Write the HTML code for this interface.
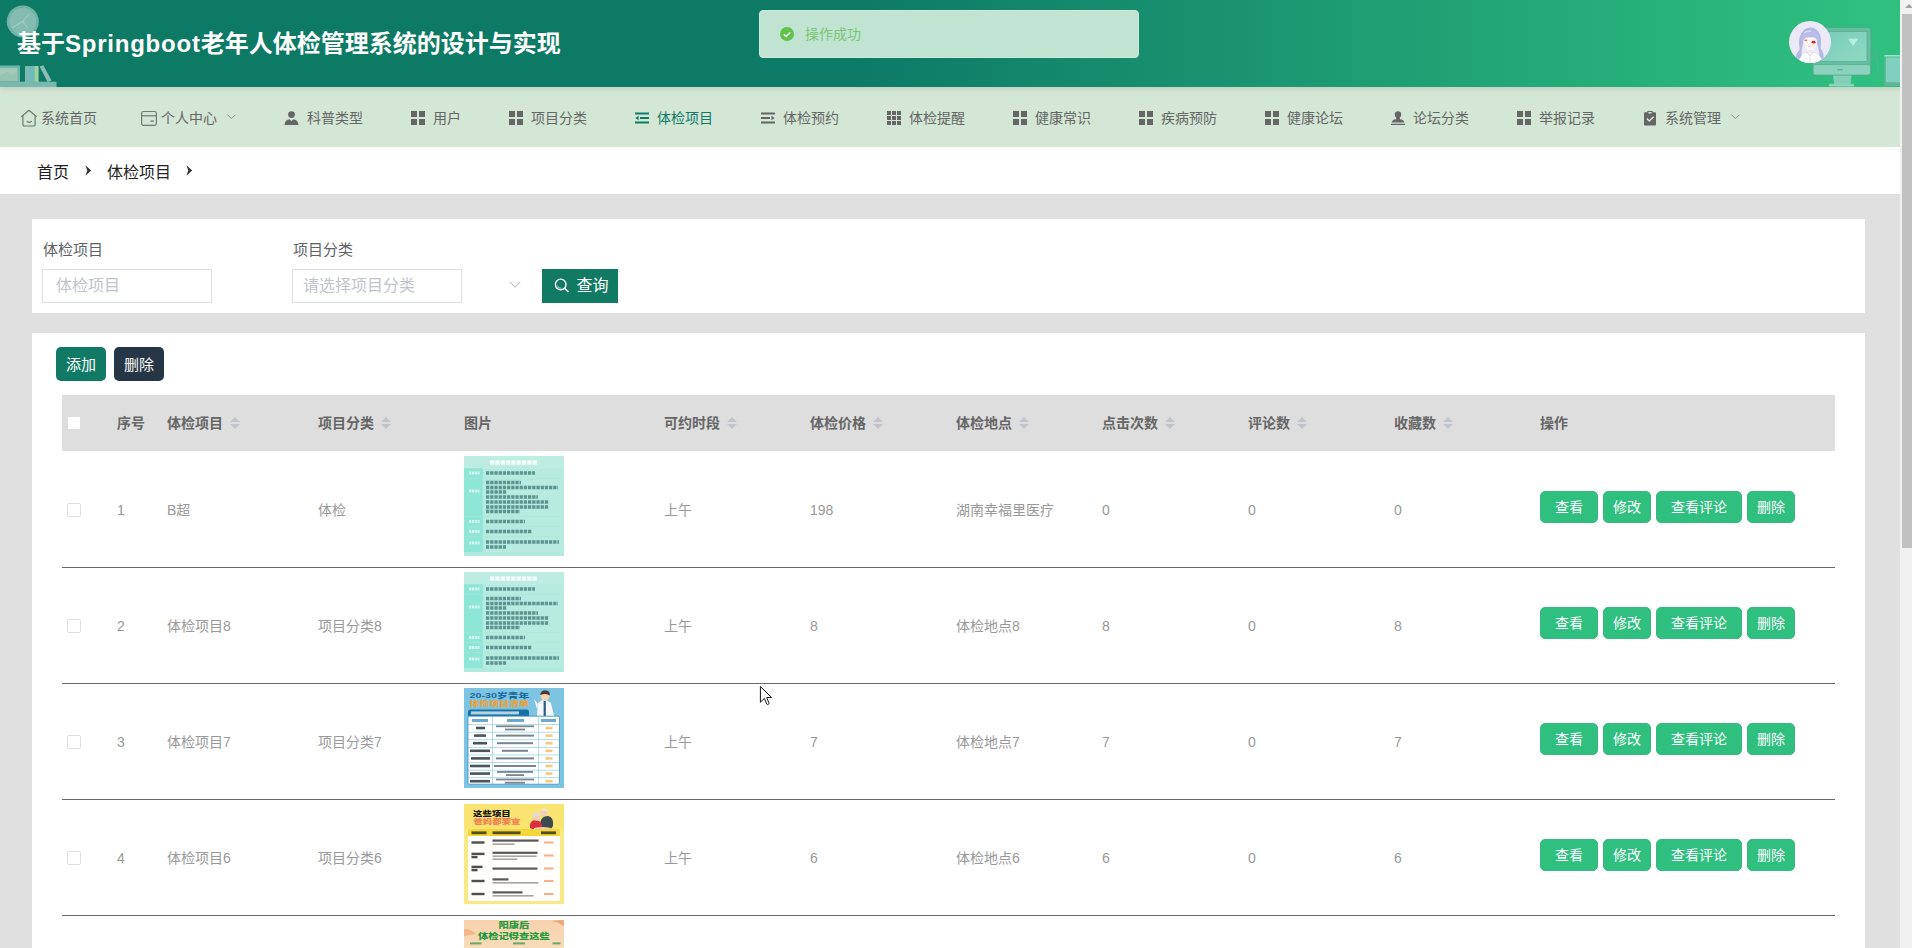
<!DOCTYPE html>
<html lang="zh-CN">
<head>
<meta charset="utf-8">
<title>基于Springboot老年人体检管理系统的设计与实现</title>
<style>
*{box-sizing:border-box;margin:0;padding:0}
html,body{width:1912px;height:948px;overflow:hidden;background:#e0e0e0;font-family:"Liberation Sans","Noto Sans CJK SC",sans-serif;color:#606266;font-size:14px}
#page{position:absolute;left:0;top:0;width:1900px;height:948px;overflow:hidden;background:#e0e0e0}
#sb{position:absolute;left:1900px;top:0;width:12px;height:948px;background:#f1f1f1}
#sb .thumb{position:absolute;left:2px;top:14px;width:10px;height:534px;background:#c1c1c1}
#sb .up{position:absolute;left:5px;top:4px;width:0;height:0;border-left:4px solid transparent;border-right:4px solid transparent;border-bottom:4px solid #a3a3a3}
/* header */
#hd{position:absolute;left:0;top:0;width:1900px;height:87px;background:linear-gradient(90deg,#0d7a66 0%,#0d7a66 45%,#2fc080 99%,#2fc080 100%);box-shadow:0 2px 5px rgba(0,0,0,.10);z-index:3}
#title{position:absolute;left:17px;top:26px;height:36px;line-height:36px;font-size:24px;font-weight:700;color:#fff;white-space:nowrap}
#toast{position:absolute;left:759px;top:10px;width:380px;height:48px;border-radius:4px;background:#c1e3d1;border:1px solid #cfead9}
#toast .t{position:absolute;left:45px;top:0;line-height:47px;font-size:14px;color:#7cc576}
#toast svg{position:absolute;left:20px;top:16px}
/* nav */
#nav{position:absolute;left:0;top:87px;width:1900px;height:60px;background:#d4e6d6;z-index:2}
.mi{position:absolute;top:1px;height:60px;line-height:61px;font-size:14px;color:#666;white-space:nowrap;fill:#666;stroke:#666}
.mi svg{position:absolute;top:22px;left:0;overflow:visible}
.mi.act{color:#0f7a66;fill:#0f7a66;stroke:#0f7a66}
/* breadcrumb */
#bc{position:absolute;left:0;top:147px;width:1900px;height:47px;background:#fff}
#bc span{position:absolute;top:1px;line-height:50px;font-size:16px;color:#222;white-space:nowrap}
#bc svg{position:absolute;top:17.5px}
/* panels */
#p1{position:absolute;left:32px;top:219px;width:1833px;height:94px;background:#fff}
#p2{position:absolute;left:32px;top:333px;width:1833px;height:640px;background:#fff}
.lbl{position:absolute;font-size:15px;color:#606266;line-height:20px;white-space:nowrap}
.inp{position:absolute;height:34px;border:1px solid #dcdfe6;background:#fff;font-size:16px;line-height:32px;color:#c0c4cc;padding-left:12px;white-space:nowrap}
.btn{position:absolute;color:#fff;text-align:center;white-space:nowrap}
/* table */
#th{position:absolute;left:62px;top:395px;width:1773px;height:56px;background:#dedede}
.h{position:absolute;top:0;height:56px;line-height:56px;font-size:14px;font-weight:700;color:#666;white-space:nowrap}
.car{display:inline-block;position:relative;width:10px;height:14px;margin-left:7px;vertical-align:middle;top:-1px}
.car:before,.car:after{content:"";position:absolute;left:0;border:5px solid transparent}
.car:before{top:-4px;border-bottom-color:#c0c4cc}
.car:after{top:8px;border-top-color:#c0c4cc}
.row{position:absolute;left:62px;width:1773px;height:116px;border-bottom:1px solid #666}
.c{position:absolute;top:0;height:115px;line-height:116px;font-size:14px;color:#999;white-space:nowrap}
.cb{position:absolute;left:5px;top:51px;width:14px;height:14px;border:1px solid #dcdfe6;border-radius:2px;background:#fff}
.ob{position:absolute;top:39px;height:32px;line-height:30px;border-radius:5px;background:#2fc080;border:1px solid #3ab781;color:#fff;font-size:14px;text-align:center}
.im{position:absolute;left:402px;top:4px;width:100px;height:100px;overflow:hidden}
</style>
</head>
<body>
<svg width="0" height="0" style="position:absolute">
<defs>
<symbol id="i-home" viewBox="0 0 16 18" overflow="visible"><path d="M0.7 7.5 L8 1.3 L15.3 7.5" fill="none" stroke="#6f7b71" stroke-width="1.2" stroke-linecap="round" stroke-linejoin="round"/><path d="M1.9 6.8 V15.4 a1.6 1.6 0 0 0 1.6 1.6 H12.5 a1.6 1.6 0 0 0 1.6 -1.6 V6.8" fill="none" stroke="#6f7b71" stroke-width="1.2"/><path d="M6.2 12.5 q2.1 1.7 4.2 0" fill="none" stroke="#6f7b71" stroke-width="1.2" stroke-linecap="round"/></symbol>
<symbol id="i-wallet" viewBox="0 0 16 18" overflow="visible"><rect x="0.6" y="2.5" width="14.8" height="13.9" rx="1.8" fill="none" stroke="#6f7b71" stroke-width="1.2"/><path d="M0.6 6.8 H15.4" fill="none" stroke="#6f7b71" stroke-width="1.2"/><path d="M9.4 12.1 H12.9" fill="none" stroke="#6f7b71" stroke-width="1.3"/></symbol>
<symbol id="i-user" viewBox="0 0 16 16"><circle cx="7.5" cy="4.6" r="3.4" stroke="none"/><path d="M0.5 15 C0.8 11.2 3.2 9.4 5.4 9.2 L7.5 11 L9.6 9.2 C11.8 9.4 14.2 11.2 14.5 15 Z" stroke="none"/></symbol>
<symbol id="i-g4" viewBox="0 0 16 16"><path d="M0 1h6v6h-6z M8 1h6v6h-6z M0 9h6v6h-6z M8 9h6v6h-6z" stroke="none"/></symbol>
<symbol id="i-g9" viewBox="0 0 16 16"><path d="M0 1h4v4h-4z M5 1h4v4h-4z M10 1h4v4h-4z M0 6h4v4h-4z M5 6h4v4h-4z M10 6h4v4h-4z M0 11h4v4h-4z M5 11h4v4h-4z M10 11h4v4h-4z" stroke="none"/></symbol>
<symbol id="i-outdent" viewBox="0 0 16 16"><path d="M0 2.5h14v2h-14z M5 7h9v2h-9z M0 11.5h14v2h-14z M0.3 8 L3.6 5.8 V10.2 Z" stroke="none"/></symbol>
<symbol id="i-indent" viewBox="0 0 16 16"><path d="M0 2.5h14v2h-14z M0 7h9v2h-9z M0 11.5h14v2h-14z M13.7 8 L10.4 5.8 V10.2 Z" stroke="none"/></symbol>
<symbol id="i-stamp" viewBox="0 0 16 16"><circle cx="7" cy="4.4" r="3.2" stroke="none"/><path d="M5.4 6 H8.6 L9 9.2 C11.5 9.4 13 10.4 13.4 12.6 H0.6 C1 10.4 2.5 9.4 5 9.2 Z M0 13.8 H14 V15 H0 Z" stroke="none"/></symbol>
<symbol id="i-clip" viewBox="0 0 16 16"><path fill-rule="evenodd" d="M1 3.2 a1 1 0 0 1 1 -1 H4.4 V1 H9.6 V2.2 H12 a1 1 0 0 1 1 1 V14.5 a1 1 0 0 1 -1 1 H2 a1 1 0 0 1 -1 -1 Z M5.4 2 V3.6 H8.6 V2 Z M3.4 9.2 L4.5 8.1 L6.3 9.9 L10 6.2 L11.1 7.3 L6.3 12.1 Z" stroke="none"/></symbol>
</defs>
</svg>
<div id="page">
<div id="hd">
  <svg style="position:absolute;left:0;top:0" width="70" height="87" viewBox="0 0 70 87">
    <circle cx="22.8" cy="21.4" r="16" fill="#7ab6ac" opacity=".92"/>
    <circle cx="22.8" cy="21.4" r="13.4" fill="#86bdb4" opacity=".9"/>
    <path d="M22.8 21.4 L29 14.4 M22.8 21.4 L12.6 27.4 M22.8 21.4 L27.4 28" stroke="#9ccbc2" stroke-width="1.3" fill="none" stroke-linecap="round"/>
    <rect x="0" y="65.5" width="20" height="16.4" fill="#72b6ab"/>
    <rect x="0" y="68" width="17.4" height="13" fill="#a2cab6"/>
    <path d="M0 76 L7 72 L12 75 L17.4 71 V81 H0Z" fill="#96c4ad"/>
    <rect x="25" y="66" width="5" height="16" fill="#7eb6b1"/>
    <rect x="30" y="66" width="4.2" height="16" fill="#6dbbc0"/>
    <rect x="34.2" y="66" width="4.4" height="16" fill="#9dd0a2"/>
    <path d="M39.6 66.4 L43.2 65.2 L51.6 80.6 L47.6 81.9 Z" fill="#8fbcb8"/>
    <rect x="0" y="81.7" width="56.5" height="5.3" fill="#79b8ad"/>
  </svg>
  <div id="title">基于<span style="letter-spacing:.77px">Springboot</span>老年人体检管理系统的设计与实现</div>
  <div id="toast"><svg width="14" height="14" viewBox="0 0 14 14"><circle cx="7" cy="7" r="7" fill="#5fc24a"/><path d="M3.8 7.2 L6.1 9.4 L10.2 5.2" fill="none" stroke="#fff" stroke-width="1.4"/></svg><div class="t">操作成功</div></div>
  <svg style="position:absolute;left:1780px;top:0" width="120" height="87" viewBox="0 0 120 87">
    <defs><linearGradient id="scr" x1="0" y1="0" x2="1" y2="1"><stop offset="0" stop-color="#78cdb9"/><stop offset="1" stop-color="#8fd8c3"/></linearGradient>
    <clipPath id="avc"><circle cx="30" cy="42" r="21"/></clipPath></defs>
    <!-- monitor -->
    <rect x="32.6" y="27.4" width="58.4" height="48" rx="3" fill="#66bd9f" stroke="#4aa98a" stroke-width=".8"/>
    <rect x="33.2" y="64.6" width="57.2" height="10.4" rx="2.4" fill="#8bd3bd" stroke="#4fae90" stroke-width=".7"/>
    <rect x="36.6" y="31.6" width="50.4" height="30" fill="url(#scr)" stroke="#4fae90" stroke-width=".7"/>
    <rect x="57" y="69.2" width="6" height="1" rx=".5" fill="#4fa88a"/>
    <path d="M53 75.4 H71.6 L70.4 84 H54.2 Z" fill="#83cfb8"/>
    <rect x="49" y="83.8" width="25" height="2.6" rx="1.2" fill="#8ad6be"/>
    <path d="M68 38.8 H78.2 L73.1 46 Z" fill="#b6efe0"/>
    <!-- cable -->
    <path d="M91 59 Q94 58 94 52 Q94 48 96 50 L99 76 Q99 80 104 80" fill="none" stroke="#4fb48f" stroke-width="1"/>
    <!-- tablet -->
    <rect x="104.2" y="55" width="20" height="31" rx="1.6" fill="#5cb697"/>
    <rect x="105.8" y="57.4" width="18" height="24.8" fill="#7fd0bd"/>
    <rect x="104.2" y="55" width="20" height="1.4" rx=".7" fill="#9be4d0"/>
    <!-- avatar -->
    <circle cx="30" cy="42" r="21" fill="#ece9f6"/>
    <g clip-path="url(#avc)">
      <path d="M19.6 50 Q17 36 24.4 29.6 Q31 25.4 37 30 Q42.6 35 40.6 48 Q44.6 54 43.6 61 L39.6 58.6 Q39.6 50 37 44 L23 44 Q21 50 21.4 57 L15.6 62 Q14.6 55 19.6 50Z" fill="#b3b8e6"/>
      <ellipse cx="30.2" cy="42.6" rx="7" ry="7.6" fill="#fdf3f1"/>
      <path d="M21.8 42.4 Q20.4 30.4 30 30 Q39.6 30.4 38.8 42 Q36.6 36.6 30.2 37.4 Q24.4 36.8 21.8 42.4Z" fill="#b9bde8"/>
      <path d="M24 33 Q27 30.6 31 31.4" fill="none" stroke="#d9dcf5" stroke-width="1.2"/>
      <path d="M20 58 Q24.6 51.4 30 53 Q35.4 51.4 41 58 L43 66 H18Z" fill="#fefdfe"/>
      <path d="M26.6 52 L30 55.6 L33.4 52" fill="none" stroke="#d9bdb8" stroke-width=".7"/>
      <path d="M30 55.6 V64" fill="none" stroke="#e4d0d0" stroke-width=".6"/>
      <ellipse cx="33.6" cy="42.2" rx="2" ry="1.4" fill="#dc2a30"/>
      <ellipse cx="25.8" cy="40.4" rx="1.5" ry=".8" fill="#d9646c" opacity=".85"/>
      <path d="M28.4 46 Q30 46.9 31.6 46" fill="none" stroke="#eaa9a9" stroke-width=".5"/>
    </g>
  </svg>
</div>
<div id="nav">
<div class="mi" style="left:21px;padding-left:20px"><svg style="top:21px" width="16" height="18" viewBox="0 0 16 18"><use href="#i-home"/></svg>系统首页</div>
<div class="mi" style="left:141px;padding-left:20px"><svg style="top:21px" width="16" height="18" viewBox="0 0 16 18"><use href="#i-wallet"/></svg>个人中心<svg class="arr" style="left:86px;top:26px" width="9" height="6" viewBox="0 0 9 6"><path d="M0.5 0.7 L4.5 4.7 L8.5 0.7" fill="none" stroke="#8a948a" stroke-width="1"/></svg></div>
<div class="mi" style="left:284px;padding-left:23px"><svg width="16" height="16" viewBox="0 0 16 16"><use href="#i-user"/></svg>科普类型</div>
<div class="mi" style="left:411px;padding-left:22px"><svg width="16" height="16" viewBox="0 0 16 16"><use href="#i-g4"/></svg>用户</div>
<div class="mi" style="left:509px;padding-left:22px"><svg width="16" height="16" viewBox="0 0 16 16"><use href="#i-g4"/></svg>项目分类</div>
<div class="mi act" style="left:635px;padding-left:22px"><svg width="16" height="16" viewBox="0 0 16 16"><use href="#i-outdent"/></svg>体检项目</div>
<div class="mi" style="left:761px;padding-left:22px"><svg width="16" height="16" viewBox="0 0 16 16"><use href="#i-indent"/></svg>体检预约</div>
<div class="mi" style="left:887px;padding-left:22px"><svg width="16" height="16" viewBox="0 0 16 16"><use href="#i-g9"/></svg>体检提醒</div>
<div class="mi" style="left:1013px;padding-left:22px"><svg width="16" height="16" viewBox="0 0 16 16"><use href="#i-g4"/></svg>健康常识</div>
<div class="mi" style="left:1139px;padding-left:22px"><svg width="16" height="16" viewBox="0 0 16 16"><use href="#i-g4"/></svg>疾病预防</div>
<div class="mi" style="left:1265px;padding-left:22px"><svg width="16" height="16" viewBox="0 0 16 16"><use href="#i-g4"/></svg>健康论坛</div>
<div class="mi" style="left:1391px;padding-left:22px"><svg width="16" height="16" viewBox="0 0 16 16"><use href="#i-stamp"/></svg>论坛分类</div>
<div class="mi" style="left:1517px;padding-left:22px"><svg width="16" height="16" viewBox="0 0 16 16"><use href="#i-g4"/></svg>举报记录</div>
<div class="mi" style="left:1643px;padding-left:22px"><svg width="16" height="16" viewBox="0 0 16 16"><use href="#i-clip"/></svg>系统管理<svg class="arr" style="left:88px;top:26px" width="9" height="6" viewBox="0 0 9 6"><path d="M0.5 0.7 L4.5 4.7 L8.5 0.7" fill="none" stroke="#8a948a" stroke-width="1"/></svg></div>
</div>
<div id="bc">
  <span style="left:37px">首页</span><svg style="left:85px" width="7" height="11" viewBox="0 0 7 11"><path d="M0.4 0.2 L6.2 5.5 L0.4 10.8 L2.3 5.5 Z" fill="#333"/></svg>
  <span style="left:107px">体检项目</span><svg style="left:186px" width="7" height="11" viewBox="0 0 7 11"><path d="M0.4 0.2 L6.2 5.5 L0.4 10.8 L2.3 5.5 Z" fill="#333"/></svg>
</div>
<div id="p1"></div>
<div class="lbl" style="left:43px;top:240px">体检项目</div>
<div class="inp" style="left:42px;top:269px;width:170px;padding-left:13px">体检项目</div>
<div class="lbl" style="left:293px;top:240px">项目分类</div>
<div class="inp" style="left:292px;top:269px;width:170px;padding-left:10px">请选择项目分类</div>
<svg style="position:absolute;left:509px;top:281px" width="12" height="8" viewBox="0 0 12 8"><path d="M0.8 0.8 L6 6 L11.2 0.8" fill="none" stroke="#c0c4cc" stroke-width="1.2"/></svg>
<div class="btn" style="left:542px;top:269px;width:76px;height:34px;background:#117a63;font-size:16px;line-height:33px;padding-left:25px">查询<svg style="position:absolute;left:12px;top:8.6px" width="16" height="16" viewBox="0 0 16 16"><circle cx="6.7" cy="6.4" r="5.3" fill="none" stroke="#fff" stroke-width="1.4"/><path d="M3.4 7.6 A3.6 3.6 0 0 0 7.2 10.2" fill="none" stroke="#fff" stroke-width=".8" opacity=".8"/><path d="M10.6 10.4 L14.2 13.6" stroke="#fff" stroke-width="1.5" stroke-linecap="round"/></svg></div>
<div id="p2"></div>
<div class="btn" style="left:56px;top:347px;width:50px;height:34px;border-radius:5px;background:#117a65;font-size:15px;line-height:36px">添加</div>
<div class="btn" style="left:114px;top:347px;width:50px;height:34px;border-radius:5px;background:#253746;font-size:15px;line-height:36px">删除</div>
<div id="th">
<div style="position:absolute;left:6px;top:22px;width:12px;height:12px;background:#fff;border-radius:1px"></div>
<div class="h" style="left:55px">序号</div>
<div class="h" style="left:105px">体检项目<span class="car"></span></div>
<div class="h" style="left:256px">项目分类<span class="car"></span></div>
<div class="h" style="left:402px">图片</div>
<div class="h" style="left:602px">可约时段<span class="car"></span></div>
<div class="h" style="left:748px">体检价格<span class="car"></span></div>
<div class="h" style="left:894px">体检地点<span class="car"></span></div>
<div class="h" style="left:1040px">点击次数<span class="car"></span></div>
<div class="h" style="left:1186px">评论数<span class="car"></span></div>
<div class="h" style="left:1332px">收藏数<span class="car"></span></div>
<div class="h" style="left:1478px">操作</div>
</div>
<div class="row" style="top:452px">
<div class="cb"></div>
<div class="c" style="left:55px">1</div>
<div class="c" style="left:105px">B超</div>
<div class="c" style="left:256px">体检</div>
<div class="c" style="left:602px">上午</div>
<div class="c" style="left:748px">198</div>
<div class="c" style="left:894px">湖南幸福里医疗</div>
<div class="c" style="left:1040px">0</div>
<div class="c" style="left:1186px">0</div>
<div class="c" style="left:1332px">0</div>
<div class="im"><svg width="100" height="100" viewBox="0 0 100 100"><rect width="100" height="100" fill="#b7ebe0"/><rect y="0" width="100" height="12.3" fill="#bdece3"/><rect y="12.3" width="18.7" height="83.7" fill="#8de6d6"/><rect y="96" width="100" height="4" fill="#b0eadd"/><rect x="0" y="22.5" width="96" height="0.6" fill="#a9e6da"/><rect x="0" y="60" width="96" height="0.6" fill="#a9e6da"/><rect x="0" y="70.5" width="96" height="0.6" fill="#a9e6da"/><rect x="0" y="80.5" width="96" height="0.6" fill="#a9e6da"/><path d="M26 6.5 h47" stroke="#fff" stroke-width="4.4" stroke-dasharray="4.4 .9" opacity=".8" fill="none"/><path d="M5 17 h10.6" stroke="#fff" stroke-width="3.2" stroke-dasharray="2.2 .6" opacity=".6" fill="none"/><path d="M5 35 h10.6" stroke="#fff" stroke-width="3.2" stroke-dasharray="2.2 .6" opacity=".6" fill="none"/><path d="M5 65.5 h10.6" stroke="#fff" stroke-width="3.2" stroke-dasharray="2.2 .6" opacity=".6" fill="none"/><path d="M5 75.5 h10.6" stroke="#fff" stroke-width="3.2" stroke-dasharray="2.2 .6" opacity=".6" fill="none"/><path d="M5 87 h10.6" stroke="#fff" stroke-width="3.2" stroke-dasharray="2.2 .6" opacity=".6" fill="none"/><path d="M22 17 h49" stroke="#245f5e" stroke-width="3.4" stroke-dasharray="3.3 .9" opacity=".62" fill="none"/><path d="M22 26.5 h35" stroke="#245f5e" stroke-width="3.4" stroke-dasharray="3.3 .9" opacity=".62" fill="none"/><path d="M22 31.5 h72" stroke="#245f5e" stroke-width="3.4" stroke-dasharray="3.3 .9" opacity=".62" fill="none"/><path d="M22 36 h21" stroke="#245f5e" stroke-width="3.4" stroke-dasharray="3.3 .9" opacity=".62" fill="none"/><path d="M22 41 h52" stroke="#245f5e" stroke-width="3.4" stroke-dasharray="3.3 .9" opacity=".62" fill="none"/><path d="M22 46 h63" stroke="#245f5e" stroke-width="3.4" stroke-dasharray="3.3 .9" opacity=".62" fill="none"/><path d="M22 51 h63" stroke="#245f5e" stroke-width="3.4" stroke-dasharray="3.3 .9" opacity=".62" fill="none"/><path d="M22 55.5 h34" stroke="#245f5e" stroke-width="3.4" stroke-dasharray="3.3 .9" opacity=".62" fill="none"/><path d="M22 65.5 h39" stroke="#245f5e" stroke-width="3.4" stroke-dasharray="3.3 .9" opacity=".62" fill="none"/><path d="M22 75.5 h46" stroke="#245f5e" stroke-width="3.4" stroke-dasharray="3.3 .9" opacity=".62" fill="none"/><path d="M22 86 h73" stroke="#245f5e" stroke-width="3.4" stroke-dasharray="3.3 .9" opacity=".62" fill="none"/><path d="M22 91 h20" stroke="#245f5e" stroke-width="3.4" stroke-dasharray="3.3 .9" opacity=".62" fill="none"/></svg></div>
<div class="ob" style="left:1478px;width:58px">查看</div>
<div class="ob" style="left:1541px;width:48px">修改</div>
<div class="ob" style="left:1594px;width:86px">查看评论</div>
<div class="ob" style="left:1685px;width:48px">删除</div>
</div>
<div class="row" style="top:568px">
<div class="cb"></div>
<div class="c" style="left:55px">2</div>
<div class="c" style="left:105px">体检项目8</div>
<div class="c" style="left:256px">项目分类8</div>
<div class="c" style="left:602px">上午</div>
<div class="c" style="left:748px">8</div>
<div class="c" style="left:894px">体检地点8</div>
<div class="c" style="left:1040px">8</div>
<div class="c" style="left:1186px">0</div>
<div class="c" style="left:1332px">8</div>
<div class="im"><svg width="100" height="100" viewBox="0 0 100 100"><rect width="100" height="100" fill="#b7ebe0"/><rect y="0" width="100" height="12.3" fill="#bdece3"/><rect y="12.3" width="18.7" height="83.7" fill="#8de6d6"/><rect y="96" width="100" height="4" fill="#b0eadd"/><rect x="0" y="22.5" width="96" height="0.6" fill="#a9e6da"/><rect x="0" y="60" width="96" height="0.6" fill="#a9e6da"/><rect x="0" y="70.5" width="96" height="0.6" fill="#a9e6da"/><rect x="0" y="80.5" width="96" height="0.6" fill="#a9e6da"/><path d="M26 6.5 h47" stroke="#fff" stroke-width="4.4" stroke-dasharray="4.4 .9" opacity=".8" fill="none"/><path d="M5 17 h10.6" stroke="#fff" stroke-width="3.2" stroke-dasharray="2.2 .6" opacity=".6" fill="none"/><path d="M5 35 h10.6" stroke="#fff" stroke-width="3.2" stroke-dasharray="2.2 .6" opacity=".6" fill="none"/><path d="M5 65.5 h10.6" stroke="#fff" stroke-width="3.2" stroke-dasharray="2.2 .6" opacity=".6" fill="none"/><path d="M5 75.5 h10.6" stroke="#fff" stroke-width="3.2" stroke-dasharray="2.2 .6" opacity=".6" fill="none"/><path d="M5 87 h10.6" stroke="#fff" stroke-width="3.2" stroke-dasharray="2.2 .6" opacity=".6" fill="none"/><path d="M22 17 h49" stroke="#245f5e" stroke-width="3.4" stroke-dasharray="3.3 .9" opacity=".62" fill="none"/><path d="M22 26.5 h35" stroke="#245f5e" stroke-width="3.4" stroke-dasharray="3.3 .9" opacity=".62" fill="none"/><path d="M22 31.5 h72" stroke="#245f5e" stroke-width="3.4" stroke-dasharray="3.3 .9" opacity=".62" fill="none"/><path d="M22 36 h21" stroke="#245f5e" stroke-width="3.4" stroke-dasharray="3.3 .9" opacity=".62" fill="none"/><path d="M22 41 h52" stroke="#245f5e" stroke-width="3.4" stroke-dasharray="3.3 .9" opacity=".62" fill="none"/><path d="M22 46 h63" stroke="#245f5e" stroke-width="3.4" stroke-dasharray="3.3 .9" opacity=".62" fill="none"/><path d="M22 51 h63" stroke="#245f5e" stroke-width="3.4" stroke-dasharray="3.3 .9" opacity=".62" fill="none"/><path d="M22 55.5 h34" stroke="#245f5e" stroke-width="3.4" stroke-dasharray="3.3 .9" opacity=".62" fill="none"/><path d="M22 65.5 h39" stroke="#245f5e" stroke-width="3.4" stroke-dasharray="3.3 .9" opacity=".62" fill="none"/><path d="M22 75.5 h46" stroke="#245f5e" stroke-width="3.4" stroke-dasharray="3.3 .9" opacity=".62" fill="none"/><path d="M22 86 h73" stroke="#245f5e" stroke-width="3.4" stroke-dasharray="3.3 .9" opacity=".62" fill="none"/><path d="M22 91 h20" stroke="#245f5e" stroke-width="3.4" stroke-dasharray="3.3 .9" opacity=".62" fill="none"/></svg></div>
<div class="ob" style="left:1478px;width:58px">查看</div>
<div class="ob" style="left:1541px;width:48px">修改</div>
<div class="ob" style="left:1594px;width:86px">查看评论</div>
<div class="ob" style="left:1685px;width:48px">删除</div>
</div>
<div class="row" style="top:684px">
<div class="cb"></div>
<div class="c" style="left:55px">3</div>
<div class="c" style="left:105px">体检项目7</div>
<div class="c" style="left:256px">项目分类7</div>
<div class="c" style="left:602px">上午</div>
<div class="c" style="left:748px">7</div>
<div class="c" style="left:894px">体检地点7</div>
<div class="c" style="left:1040px">7</div>
<div class="c" style="left:1186px">0</div>
<div class="c" style="left:1332px">7</div>
<div class="im"><svg width="100" height="100" viewBox="0 0 100 100" font-family="Liberation Sans,Noto Sans CJK SC,sans-serif"><rect width="100" height="100" fill="#7cc4e1"/><path d="M73 28 L74 15 Q80 9 87 15 L90 28 Z" fill="#f4f8fb"/><path d="M70 11 L74 16 L73 21 Z" fill="#f4f8fb"/><circle cx="81" cy="8" r="4.6" fill="#f6d2b8"/><path d="M76.2 7 Q77 2 82 2.4 Q86.4 3 85.8 7.4 Q82 4.6 76.2 7Z" fill="#4a3a33"/><rect x="79.6" y="13" width="2.2" height="15" fill="#2b5a86"/><text x="5.6" y="9.5" font-size="7" font-weight="900" fill="#1d6b9d" textLength="59.6" lengthAdjust="spacingAndGlyphs">20-30岁青年</text><text x="5.6" y="17.6" font-size="6.6" font-weight="900" fill="#f1a033" textLength="59.4" lengthAdjust="spacingAndGlyphs">体检项目清单</text><path d="M4 28.5 V24 Q4 21.6 6.4 21.6 H62.6 Q65 21.6 65 24 V28.5 Z" fill="#1b70a3"/><rect x="7" y="23.4" width="48" height="3" fill="#d9eef8" opacity=".8"/><rect x="4" y="28.2" width="91.5" height="68" rx="1.5" fill="#ffffff"/><rect x="4" y="36.2" width="91.5" height="0.7" fill="#8fd0e8"/><rect x="4" y="43.8" width="91.5" height="0.7" fill="#8fd0e8"/><rect x="4" y="51.4" width="91.5" height="0.7" fill="#8fd0e8"/><rect x="4" y="59.0" width="91.5" height="0.7" fill="#8fd0e8"/><rect x="4" y="66.6" width="91.5" height="0.7" fill="#8fd0e8"/><rect x="4" y="74.2" width="91.5" height="0.7" fill="#8fd0e8"/><rect x="4" y="81.8" width="91.5" height="0.7" fill="#8fd0e8"/><rect x="4" y="89.4" width="91.5" height="0.7" fill="#8fd0e8"/><rect x="28.3" y="28.2" width="0.7" height="68" fill="#8fd0e8"/><rect x="74" y="28.2" width="0.7" height="68" fill="#8fd0e8"/><rect x="4" y="28.2" width="91.5" height="68" rx="1.5" fill="none" stroke="#3f93c2" stroke-width=".8"/><rect x="8" y="31" width="16" height="3" fill="#2a86b8" opacity=".7"/><rect x="43" y="31" width="17" height="3" fill="#2a86b8" opacity=".7"/><rect x="77" y="31" width="15" height="3" fill="#2a86b8" opacity=".7"/><rect x="12" y="38.7" width="9" height="2.6" fill="#1e2a33" opacity=".8"/><rect x="32" y="37.4" width="38" height="1.8" fill="#33424d" opacity=".65"/><rect x="41" y="40.6" width="20" height="1.8" fill="#33424d" opacity=".65"/><rect x="81.5" y="38.7" width="7" height="2.6" fill="#f0b84a" opacity=".75"/><rect x="10" y="46.3" width="12" height="2.6" fill="#1e2a33" opacity=".8"/><rect x="32" y="46.6" width="38" height="2" fill="#33424d" opacity=".65"/><rect x="81.5" y="46.3" width="7" height="2.6" fill="#f0b84a" opacity=".75"/><rect x="9" y="53.9" width="14" height="2.6" fill="#1e2a33" opacity=".8"/><rect x="33" y="54.2" width="36" height="2" fill="#33424d" opacity=".65"/><rect x="81.5" y="53.9" width="7" height="2.6" fill="#f0b84a" opacity=".75"/><rect x="6" y="61.5" width="20" height="2.6" fill="#1e2a33" opacity=".8"/><rect x="38" y="61.8" width="26" height="2" fill="#33424d" opacity=".65"/><rect x="81.5" y="61.5" width="7" height="2.6" fill="#f0b84a" opacity=".75"/><rect x="7" y="69.1" width="19" height="2.6" fill="#1e2a33" opacity=".8"/><rect x="32" y="69.4" width="38" height="2" fill="#33424d" opacity=".65"/><rect x="81.5" y="69.1" width="7" height="2.6" fill="#f0b84a" opacity=".75"/><rect x="6" y="76.7" width="20" height="2.6" fill="#1e2a33" opacity=".8"/><rect x="30" y="77.0" width="42" height="2" fill="#33424d" opacity=".65"/><rect x="81.5" y="76.7" width="7" height="2.6" fill="#f0b84a" opacity=".75"/><rect x="6" y="84.3" width="20" height="2.6" fill="#1e2a33" opacity=".8"/><rect x="33" y="83.0" width="36" height="1.8" fill="#33424d" opacity=".65"/><rect x="42" y="86.2" width="18" height="1.8" fill="#33424d" opacity=".65"/><rect x="81.5" y="84.3" width="7" height="2.6" fill="#f0b84a" opacity=".75"/><rect x="6" y="91.9" width="20" height="2.6" fill="#1e2a33" opacity=".8"/><rect x="32" y="90.6" width="38" height="1.8" fill="#33424d" opacity=".65"/><rect x="41" y="93.8" width="20" height="1.8" fill="#33424d" opacity=".65"/><rect x="81.5" y="91.9" width="7" height="2.6" fill="#f0b84a" opacity=".75"/></svg></div>
<div class="ob" style="left:1478px;width:58px">查看</div>
<div class="ob" style="left:1541px;width:48px">修改</div>
<div class="ob" style="left:1594px;width:86px">查看评论</div>
<div class="ob" style="left:1685px;width:48px">删除</div>
</div>
<div class="row" style="top:800px">
<div class="cb"></div>
<div class="c" style="left:55px">4</div>
<div class="c" style="left:105px">体检项目6</div>
<div class="c" style="left:256px">项目分类6</div>
<div class="c" style="left:602px">上午</div>
<div class="c" style="left:748px">6</div>
<div class="c" style="left:894px">体检地点6</div>
<div class="c" style="left:1040px">6</div>
<div class="c" style="left:1186px">0</div>
<div class="c" style="left:1332px">6</div>
<div class="im"><svg width="100" height="100" viewBox="0 0 100 100" font-family="Liberation Sans,Noto Sans CJK SC,sans-serif"><rect width="100" height="100" fill="#fae884"/><rect width="100" height="26" fill="#f9e472"/><path d="M76 25 Q75 12 84 12 Q90 13 89 22 L86 26 Z" fill="#3c4a52"/><circle cx="80" cy="8.6" r="3.6" fill="#f3cdb4"/><path d="M76.6 7.4 Q78 3.6 82 4.6 Q84.4 6 83.4 8 Q80 5.6 76.6 7.4Z" fill="#e9e4e0"/><path d="M66 24 Q65 16 72 16 Q79 17 78 24 Q72 27 66 24Z" fill="#d9303f"/><circle cx="72.4" cy="13" r="3.7" fill="#f3cdb4"/><path d="M68.4 13.6 Q67.6 8.6 72.6 8.8 Q76.6 9.6 76 12.6 Q72 10.6 68.4 13.6Z" fill="#dcdcdc"/><path d="M70 24 Q78 22 87 24 L86 27 Q78 26.4 70 26.4Z" fill="#f3cdb4"/><text x="9" y="11.5" font-size="7.2" font-weight="900" fill="#141414" textLength="37.8" lengthAdjust="spacingAndGlyphs">这些项目</text><text x="9.3" y="19.7" font-size="7.2" font-weight="900" fill="#f08250" textLength="47.3" lengthAdjust="spacingAndGlyphs">爸妈都要查</text><rect x="4" y="25" width="92" height="72" rx="2.4" fill="#f3d63a"/><rect x="4" y="32" width="92" height="65" rx="2" fill="#fffefa"/><rect x="4" y="32" width="92" height="3" fill="#fffefa"/><rect x="7.5" y="27.4" width="15" height="2.8" fill="#2a2a1a" opacity=".8"/><rect x="28.5" y="27.4" width="28" height="2.8" fill="#2a2a1a" opacity=".8"/><rect x="77" y="27.4" width="15" height="2.8" fill="#2a2a1a" opacity=".8"/><rect x="7.5" y="37.3" width="13" height="2.4" fill="#222" opacity=".8"/><rect x="28.5" y="35.5" width="46" height="2.2" fill="#222" opacity=".75"/><rect x="28.5" y="39.4" width="22" height="1.6" fill="#888" opacity=".75"/><rect x="80" y="37.5" width="9.5" height="2" fill="#f29a6a" opacity=".8"/><rect x="7.5" y="48.7" width="13" height="2.4" fill="#222" opacity=".8"/><rect x="7.5" y="51.9" width="6" height="2.4" fill="#222" opacity=".8"/><rect x="28.5" y="47.7" width="45" height="2.2" fill="#222" opacity=".75"/><rect x="28.5" y="51.4" width="44" height="1.6" fill="#888" opacity=".75"/><rect x="28.5" y="54.4" width="25" height="1.6" fill="#888" opacity=".75"/><rect x="80" y="50.5" width="9.5" height="2" fill="#f29a6a" opacity=".8"/><rect x="7.5" y="61.7" width="11" height="2.4" fill="#222" opacity=".8"/><rect x="7.5" y="64.9" width="6" height="2.4" fill="#222" opacity=".8"/><rect x="28.5" y="63.5" width="45" height="2.2" fill="#222" opacity=".75"/><rect x="80" y="63.5" width="9.5" height="2" fill="#f29a6a" opacity=".8"/><rect x="7.5" y="75.8" width="13" height="2.4" fill="#222" opacity=".8"/><rect x="28.5" y="74.3" width="16" height="2.2" fill="#222" opacity=".75"/><rect x="28.5" y="78.0" width="46" height="1.6" fill="#888" opacity=".75"/><rect x="80" y="76.0" width="9.5" height="2" fill="#f29a6a" opacity=".8"/><rect x="7.5" y="88.8" width="13" height="2.4" fill="#222" opacity=".8"/><rect x="28.5" y="87.3" width="30" height="2.2" fill="#222" opacity=".75"/><rect x="28.5" y="91.0" width="41" height="1.6" fill="#888" opacity=".75"/><rect x="80" y="89.0" width="9.5" height="2" fill="#f29a6a" opacity=".8"/></svg></div>
<div class="ob" style="left:1478px;width:58px">查看</div>
<div class="ob" style="left:1541px;width:48px">修改</div>
<div class="ob" style="left:1594px;width:86px">查看评论</div>
<div class="ob" style="left:1685px;width:48px">删除</div>
</div>
<div class="row" style="top:916px">
<div class="cb"></div>
<div class="c" style="left:55px">5</div>
<div class="c" style="left:105px">体检项目5</div>
<div class="c" style="left:256px">项目分类5</div>
<div class="c" style="left:602px">上午</div>
<div class="c" style="left:748px">5</div>
<div class="c" style="left:894px">体检地点5</div>
<div class="c" style="left:1040px">5</div>
<div class="c" style="left:1186px">0</div>
<div class="c" style="left:1332px">5</div>
<div class="im"><svg width="100" height="100" viewBox="0 0 100 100" font-family="Liberation Sans,Noto Sans CJK SC,sans-serif"><defs><linearGradient id="g5" x1="0" y1="0" x2="0" y2="1"><stop offset="0" stop-color="#f7d2ad"/><stop offset=".28" stop-color="#f7dcb8"/><stop offset="1" stop-color="#f8e8c8"/></linearGradient></defs><rect width="100" height="100" fill="url(#g5)"/><path d="M0 9 Q8 9 12 14 L0 16Z" fill="#f0a878" opacity=".7"/><path d="M88 1 Q95 0 100 0 V6 Q94 2 88 1Z" fill="#ee9c6c" opacity=".8"/><text x="34.6" y="7.9" font-size="8" font-weight="900" fill="#249a3e" textLength="30.7" lengthAdjust="spacingAndGlyphs">阳康后</text><text x="13.9" y="18.9" font-size="8" font-weight="900" fill="#249a3e" textLength="72" lengthAdjust="spacingAndGlyphs">体检记得查这些</text><rect x="6" y="22.4" width="11.5" height="2" fill="#2f9446" opacity=".7"/><rect x="49" y="22.4" width="12" height="2" fill="#2f9446" opacity=".7"/><rect x="88.5" y="22.4" width="8" height="2" fill="#2f9446" opacity=".7"/></svg></div>
<div class="ob" style="left:1478px;width:58px">查看</div>
<div class="ob" style="left:1541px;width:48px">修改</div>
<div class="ob" style="left:1594px;width:86px">查看评论</div>
<div class="ob" style="left:1685px;width:48px">删除</div>
</div>
<svg style="position:absolute;left:759px;top:685px;z-index:9" width="14" height="21" viewBox="0 0 14 21"><path d="M1.4 1.6 V17.2 L5.4 13.4 L7.7 19 Q8.6 19.9 9.6 19.2 Q10.2 18.6 9.9 17.8 L7.7 12.6 L12.6 12.4 Z" fill="#fff" stroke="#111" stroke-width="1" stroke-linejoin="miter"/></svg>
</div>
<div id="sb"><div class="up"></div><div class="thumb"></div></div>
</body>
</html>
